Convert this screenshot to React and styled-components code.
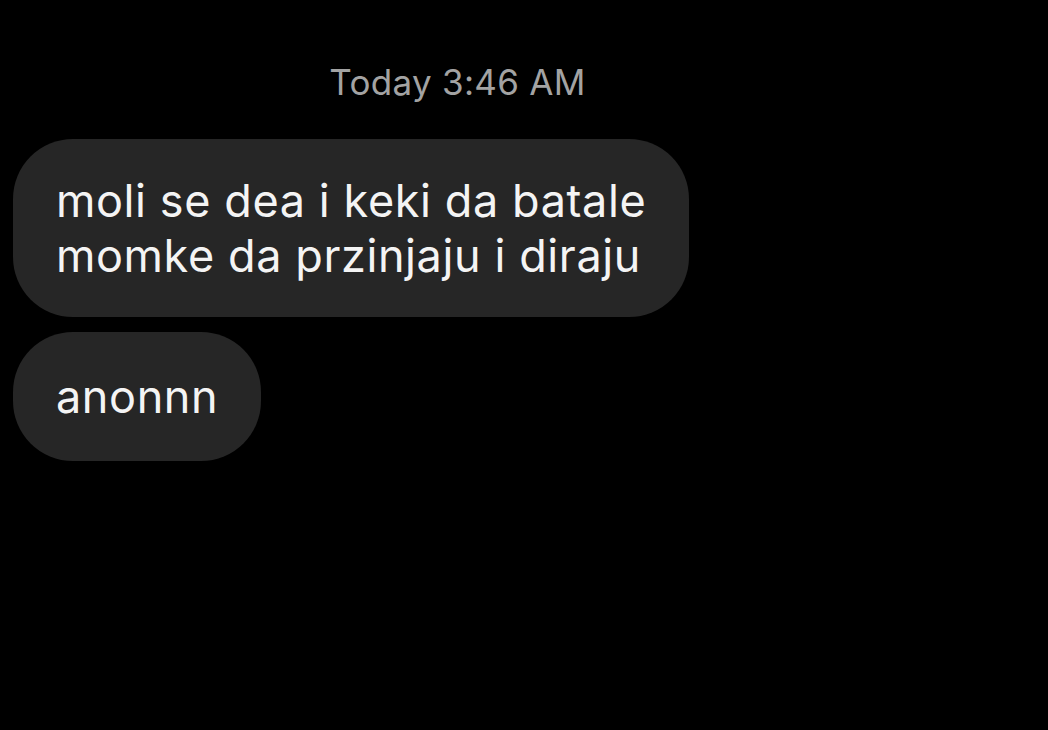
import React from "react";
import styled, { createGlobalStyle } from "styled-components";

const GlobalStyle = createGlobalStyle`
  html, body {
    margin: 0;
    padding: 0;
    background: #000;
  }
  body {
    font-family: Inter, "Noto Sans", "Liberation Sans", sans-serif;
    -webkit-font-smoothing: antialiased;
  }
`;

const Screen = styled.div`
  width: 1048px;
  height: 730px;
  background: #000;
  overflow: hidden;
  padding: 59px 0 0 13px;
  box-sizing: border-box;
`;

const Timestamp = styled.div`
  width: 889px;
  text-align: center;
  color: #a3a3a3;
  font-size: 35px;
  letter-spacing: 0.3px;
  line-height: 46px;
  margin-bottom: 34px;
`;

const Thread = styled.div`
  display: flex;
  flex-direction: column;
  align-items: flex-start;
  gap: 15px;
`;

const Bubble = styled.div`
  background: #262626;
  color: #f4f4f4;
  font-size: 45px;
  letter-spacing: 0.6px;
  line-height: 55px;
  padding: ${(p) => (p.$single ? "37px" : "34px")} 43px;
  border-radius: 60px;
  white-space: pre-line;
`;

const messages = [
  { text: "moli se dea i keki da batale\nmomke da przinjaju i diraju" },
  { text: "anonnn", single: true },
];

export default function App() {
  return (
    <Screen>
      <GlobalStyle />
      <Timestamp>Today 3:46 AM</Timestamp>
      <Thread>
        {messages.map((m, i) => (
          <Bubble key={i} $single={m.single}>
            {m.text}
          </Bubble>
        ))}
      </Thread>
    </Screen>
  );
}
